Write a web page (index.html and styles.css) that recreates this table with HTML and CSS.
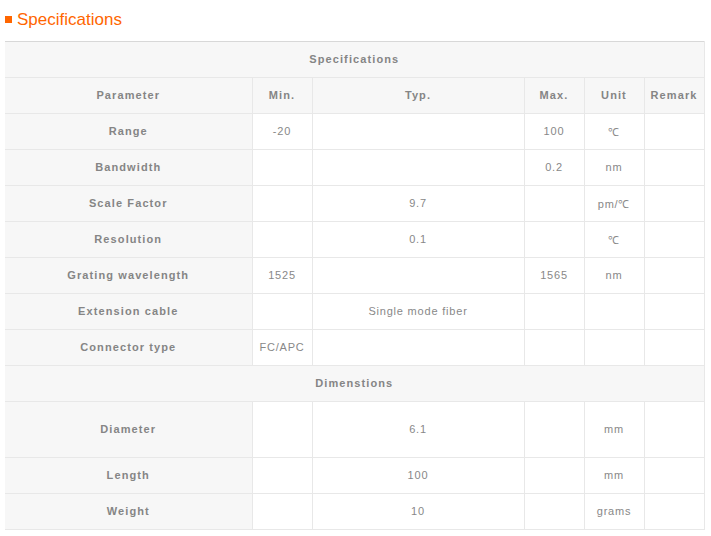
FILE: index.html
```html
<!DOCTYPE html>
<html>
<head>
<meta charset="utf-8">
<link rel="stylesheet" href="styles.css">
</head>
<body>
<h2 class="title"><span class="bullet"></span>Specifications</h2>
<table class="spec">
  <colgroup>
    <col class="c-param"><col class="c-min"><col class="c-typ"><col class="c-max"><col class="c-unit"><col class="c-rem">
  </colgroup>
  <tr><th class="sect" colspan="6">Specifications</th></tr>
  <tr class="head"><th>Parameter</th><th>Min.</th><th>Typ.</th><th>Max.</th><th>Unit</th><th>Remark</th></tr>
  <tr><th>Range</th><td>-20</td><td></td><td>100</td><td>℃</td><td></td></tr>
  <tr><th>Bandwidth</th><td></td><td></td><td>0.2</td><td>nm</td><td></td></tr>
  <tr><th>Scale Factor</th><td></td><td>9.7</td><td></td><td>pm/℃</td><td></td></tr>
  <tr><th>Resolution</th><td></td><td>0.1</td><td></td><td>℃</td><td></td></tr>
  <tr><th>Grating wavelength</th><td>1525</td><td></td><td>1565</td><td>nm</td><td></td></tr>
  <tr><th>Extension cable</th><td></td><td>Single mode fiber</td><td></td><td></td><td></td></tr>
  <tr><th>Connector type</th><td>FC/APC</td><td></td><td></td><td></td><td></td></tr>
  <tr><th class="sect" colspan="6">Dimenstions</th></tr>
  <tr class="tall"><th>Diameter</th><td></td><td>6.1</td><td></td><td>mm</td><td></td></tr>
  <tr><th>Length</th><td></td><td>100</td><td></td><td>mm</td><td></td></tr>
  <tr><th>Weight</th><td></td><td>10</td><td></td><td>grams</td><td></td></tr>
</table>
</body>
</html>
```
FILE: styles.css
```css
html, body { margin: 0; padding: 0; background: #fff; }
body { padding: 0 5px; font-family: "Liberation Sans", Arial, sans-serif; }
.title {
  margin: 0;
  padding-top: 10px;
  height: 41px;
  box-sizing: border-box;
  font-size: 17px;
  font-weight: normal;
  color: #ff6600;
  letter-spacing: 0;
  display: flex;
  align-items: flex-start;
  line-height: 20px;
}
.bullet {
  display: inline-block;
  width: 7px; height: 7px;
  background: #ff6600;
  margin: 6px 5px 0 0;
}
.spec {
  border-collapse: collapse;
  width: 699px;
  table-layout: fixed;
  font-size: 11px;
  color: #888;
  letter-spacing: 0.8px;
}
.c-param { width: 247px; }
.c-min { width: 60px; }
.c-typ { width: 212px; }
.c-max { width: 60px; }
.c-unit { width: 60px; }
.c-rem { width: 60px; }
.spec th, .spec td {
  height: 34px;
  padding: 0 0 1px;
  text-align: center;
  border: 1px solid #e8e8e8;
}
.spec tr > :first-child { border-left: none; }
.spec tr:first-child th { border-top-color: #d8d8d8; }
.spec th {
  background: #f7f7f7;
  color: #858585;
  font-weight: bold;
  letter-spacing: 1.1px;
}
.spec td { background: #fff; }
.spec .tall th, .spec .tall td { height: 54px; }
```
